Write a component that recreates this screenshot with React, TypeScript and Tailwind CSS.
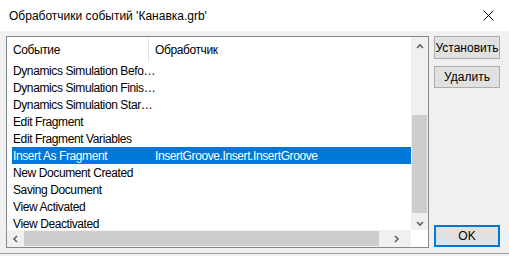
import React from 'react';

const font = { fontFamily: '"Liberation Sans", Arial, sans-serif' };

const rows: [string, string][] = [
  ['Dynamics Simulation Befo…', ''],
  ['Dynamics Simulation Finis…', ''],
  ['Dynamics Simulation Star…', ''],
  ['Edit Fragment', ''],
  ['Edit Fragment Variables', ''],
  ['Insert As Fragment', 'InsertGroove.Insert.InsertGroove'],
  ['New Document Created', ''],
  ['Saving Document', ''],
  ['View Activated', ''],
  ['View Deactivated', ''],
];

const Chevron: React.FC<{ dir: 'up' | 'down' | 'left' | 'right' }> = ({ dir }) => {
  const pts = {
    up: '1,5 4,2 7,5',
    down: '1,2 4,5 7,2',
    left: '5,1 2,4 5,7',
    right: '2,1 5,4 2,7',
  }[dir];
  const vertical = dir === 'up' || dir === 'down';
  return (
    <svg width={vertical ? 8 : 7} height={vertical ? 7 : 8} viewBox={vertical ? '0 0 8 7' : '0 0 7 8'}>
      <polyline points={pts} fill="none" stroke="#606060" strokeWidth="1.6" />
    </svg>
  );
};

const App: React.FC = () => {
  return (
    <div className="w-[509px] h-[256px] bg-[#f0f0f0] flex flex-col text-[12px] text-black overflow-hidden" style={font}>
      {/* title bar */}
      <div className="h-[31px] bg-white flex items-center justify-between pl-[9px] pr-[15px]">
        <span>Обработчики событий 'Канавка.grb'</span>
        <svg width="11" height="11" viewBox="0 0 11 11">
          <path d="M0.5 0.5 L10.5 10.5 M10.5 0.5 L0.5 10.5" stroke="#000" strokeWidth="1" />
        </svg>
      </div>

      <div className="flex pl-[6px] pt-[5px]">
        {/* list view */}
        <div className="w-[423px] h-[212px] border border-[#828790] bg-white grid grid-cols-[404px_17px] grid-rows-[193px_17px] tracking-[-0.4px]">
          <div className="overflow-hidden">
            <div className="h-[25px] flex items-center">
              <div className="w-[141px] pl-[6px]">Событие</div>
              <div className="w-px h-full bg-[#e5e5e5]" />
              <div className="pl-[6px]">Обработчик</div>
            </div>
            {rows.map(([ev, handler], i) => {
              const sel = i === 5;
              return (
                <div key={ev} className="h-[17px] pl-[5px]">
                  <div className={`h-full flex items-center ${sel ? 'bg-[#0078d7] text-white' : ''}`}>
                    <div className="w-[136px] pl-px whitespace-nowrap">{ev}</div>
                    <div className="pl-[7px] whitespace-nowrap">{handler}</div>
                  </div>
                </div>
              );
            })}
          </div>

          {/* vertical scrollbar */}
          <div className="bg-[#f0f0f0] flex flex-col">
            <div className="h-[17px] flex items-center justify-center pt-[2px]">
              <Chevron dir="up" />
            </div>
            <div className="h-[61px]" />
            <div className="h-[98px] mx-px bg-[#cdcdcd]" />
            <div className="flex-1 flex items-center justify-center pt-[4px]">
              <Chevron dir="down" />
            </div>
          </div>

          {/* horizontal scrollbar */}
          <div className="bg-[#f0f0f0] flex items-center">
            <div className="w-[17px] h-full flex items-center justify-center pr-px">
              <Chevron dir="left" />
            </div>
            <div className="w-[355px] h-[15px] bg-[#cdcdcd]" />
            <div className="flex-1 h-full flex items-center justify-center pl-[2px]">
              <Chevron dir="right" />
            </div>
          </div>
          <div className="bg-white" />
        </div>

        {/* buttons */}
        <div className="ml-[5px] w-[66px] h-[212px] flex flex-col">
          <button className="h-[23px] border border-[#adadad] bg-[#e1e1e1] text-[12px] leading-none">Установить</button>
          <button className="mt-[7px] h-[22px] border border-[#adadad] bg-[#e1e1e1] text-[12px] leading-none">Удалить</button>
          <div className="flex-1" />
          <button className="mb-[1px] h-[22px] border-2 border-[#0078d7] bg-[#e1e1e1] text-[12px] leading-none">OK</button>
        </div>
      </div>

      <div className="mt-[5px] h-px bg-[#a0a0a0]" />
    </div>
  );
};

export default App;
